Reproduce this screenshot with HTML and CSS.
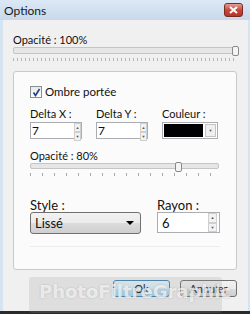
FILE: index.html
```html
<!DOCTYPE html>
<html lang="fr">
<head>
    <meta charset="UTF-8">
    <title>Options</title>
    <link rel="stylesheet" href="styles.css">
</head>
<body>
    <div class="window">
        <div class="titlebar">
            <span class="title">Options</span>
            <span class="close">
                <svg width="9" height="8" viewBox="0 0 9 8"><path d="M1 1 L8 7 M8 1 L1 7" stroke="#fff" stroke-width="2"/></svg>
            </span>
        </div>
        <div class="client">
            <div class="lbl top">Opacité : 100%</div>
            <div class="track"><span class="thumb" style="left: 218px"></span></div>
            <div class="ticks dense"></div>

            <div class="group">
                <label class="check-row">
                    <span class="checkbox">
                        <svg width="9" height="9" viewBox="0 0 9 9"><path d="M1.5 4.5 L3.5 7.5 L7.5 1" stroke="#1f3f8a" stroke-width="1.6" fill="none"/></svg>
                    </span>
                    Ombre portée
                </label>

                <div class="fields">
                    <div class="field">
                        <div class="lbl">Delta X :</div>
                        <div class="spin"><span class="val">7</span><span class="arrows"><i>▲</i><i>▼</i></span></div>
                    </div>
                    <div class="field">
                        <div class="lbl">Delta Y :</div>
                        <div class="spin"><span class="val">7</span><span class="arrows"><i>▲</i><i>▼</i></span></div>
                    </div>
                    <div class="field">
                        <div class="lbl">Couleur :</div>
                        <div class="color"><span class="swatch"></span><span class="drop"><i>▼</i></span></div>
                    </div>
                </div>

                <div class="lbl op">Opacité : 80%</div>
                <div class="track small"><span class="thumb" style="left: 144px"></span></div>
                <div class="ticks sparse"></div>

                <div class="fields lower">
                    <div class="field">
                        <div class="lbl big">Style :</div>
                        <div class="select">Lissé <span class="caret"></span></div>
                    </div>
                    <div class="field">
                        <div class="lbl big">Rayon :</div>
                        <div class="spin tall"><span class="val">6</span><span class="arrows"><i>▲</i><i>▼</i></span></div>
                    </div>
                </div>
                <div class="ghost"></div>
            </div>

            <div class="buttons">
                <button class="btn focus">Ok</button>
                <button class="btn">Annuler</button>
                <div class="watermark">PhotoFiltreGraphic</div>
            </div>
        </div>
    </div>
</body>
</html>
```

FILE: styles.css
```css
body {
    margin: 0;
    font-family: Lato, "Open Sans", sans-serif;
    font-size: 11px;
    color: #111;
}

.window {
    width: 250px;
    height: 314px;
    box-sizing: border-box;
    background: #d6e4f2;
    border-bottom: 3px solid #2a2a2a;
    display: flex;
    flex-direction: column;
}

.titlebar {
    height: 20px;
    display: flex;
    align-items: center;
    justify-content: space-between;
    padding: 0 7px 0 4px;
    background: linear-gradient(#dce8f5, #c7d9ec);
}

.title {
    font-size: 12px;
    color: #1a1a1a;
}

.close {
    width: 17px;
    height: 12px;
    border: 1px solid #7a2a22;
    border-radius: 3px;
    background: linear-gradient(#e8a196, #c9473a 50%, #b8342a);
    display: flex;
    align-items: center;
    justify-content: center;
}

.client {
    flex: 1;
    background: #f0f0f0;
    margin: 0 2px 0 3px;
    padding: 0 11px 0 10px;
}

.lbl {
    line-height: 14px;
    white-space: nowrap;
}

.lbl.top {
    margin-top: 13px;
}

.track {
    position: relative;
    height: 5px;
    border: 1px solid #c4c4c4;
    border-radius: 2px;
    background: #e6e6e6;
}

.thumb {
    position: absolute;
    top: -2px;
    width: 5px;
    height: 8px;
    border: 1px solid #8a8a8a;
    border-radius: 2px;
    background: #f4f4f4;
}

.ticks {
    height: 3px;
    margin-top: 4px;
}

.ticks.dense {
    background: repeating-linear-gradient(90deg, #b5b5b5 0 1px, transparent 1px 4px);
}

.ticks.sparse {
    margin-top: 4px;
    margin-right: 4px;
    background: repeating-linear-gradient(90deg, #a8a8a8 0 1px, transparent 1px 12px);
}

.group {
    margin-top: 10px;
    height: 199px;
    box-sizing: border-box;
    border: 1px solid #c9c9c9;
    border-radius: 3px;
    background: #fbfbfb;
    padding: 13px 16px 0 16px;
}

.check-row {
    display: flex;
    align-items: center;
    gap: 3px;
    line-height: 14px;
    font-size: 11.5px;
}

.checkbox {
    width: 10px;
    height: 10px;
    border: 1px solid #8e8f8f;
    background: linear-gradient(#e9e9ec, #fdfdfd);
    display: flex;
    align-items: center;
    justify-content: center;
}

.fields {
    display: flex;
    gap: 14px;
    margin-top: 8px;
}

.field .lbl {
    margin-bottom: 1px;
}

.spin {
    width: 52px;
    height: 17px;
    box-sizing: border-box;
    border: 1px solid #abadb3;
    background: #fff;
    display: flex;
    justify-content: space-between;
}

.val {
    padding: 1px 0 0 1px;
    font-size: 12px;
    line-height: 14px;
}

.arrows {
    display: flex;
    flex-direction: column;
    width: 7px;
}

.arrows i {
    flex: 1;
    font-style: normal;
    font-size: 4px;
    line-height: 7px;
    text-align: center;
    color: #555;
    border: 1px solid #cfcfcf;
    background: #f2f2f2;
}

.color {
    width: 56px;
    height: 17px;
    box-sizing: border-box;
    border: 1px solid #abadb3;
    background: #fff;
    display: flex;
    padding: 1px;
    gap: 2px;
}

.swatch {
    flex: 1;
    background: #000;
}

.drop {
    width: 9px;
    border: 1px solid #c4c4c4;
    background: #efefef;
    display: flex;
    align-items: center;
    justify-content: center;
}

.drop i {
    font-style: normal;
    font-size: 4px;
    color: #555;
}

.lbl.op {
    margin-top: 10px;
}

.track.small {
    height: 4px;
    margin-right: 1px;
}

.fields.lower {
    margin-top: 22px;
    gap: 16px;
}

.lbl.big {
    font-size: 13px;
    line-height: 14px;
    margin-bottom: 0;
}

.select {
    width: 111px;
    height: 22px;
    box-sizing: border-box;
    border: 1px solid #707070;
    border-radius: 3px;
    background: linear-gradient(#f2f2f2, #ebebeb 50%, #dcdcdc 51%, #cfcfcf);
    font-size: 13px;
    line-height: 20px;
    padding-left: 4px;
    position: relative;
}

.caret {
    position: absolute;
    right: 6px;
    top: 8px;
    border-left: 4px solid transparent;
    border-right: 4px solid transparent;
    border-top: 4px solid #000;
}

.spin.tall {
    width: 63px;
    height: 21px;
}

.spin.tall .val {
    font-size: 13px;
    padding: 3px 0 0 4px;
}

.spin.tall .arrows {
    width: 9px;
    margin-right: 2px;
}

.ghost {
    margin-top: 12px;
    height: 1px;
    background: #ececec;
}

.buttons {
    display: flex;
    justify-content: flex-end;
    gap: 10px;
    margin-top: 10px;
    position: relative;
}

.btn {
    width: 57px;
    height: 17px;
    padding: 0;
    font-family: inherit;
    font-size: 11px;
    border: 1px solid #707070;
    border-radius: 3px;
    background: linear-gradient(#f2f2f2, #ebebeb 50%, #dddddd 51%, #cfcfcf);
    color: #111;
}

.btn.focus {
    border-color: #3c7fb1;
    background: linear-gradient(#eaf6fd, #d9f0fc 50%, #bee6fd 51%, #a7d9f5);
}

.watermark {
    position: absolute;
    left: 16px;
    top: -3px;
    width: 193px;
    height: 36px;
    background: rgba(150, 150, 150, 0.2);
    border-radius: 3px;
    color: rgba(255, 255, 255, 0.7);
    font-family: "DejaVu Sans", sans-serif;
    font-weight: bold;
    font-size: 18px;
    line-height: 30px;
    padding-left: 10px;
    box-sizing: border-box;
    white-space: nowrap;
    text-shadow: 0 0 2px rgba(120, 120, 120, 0.4);
    pointer-events: none;
}
```
